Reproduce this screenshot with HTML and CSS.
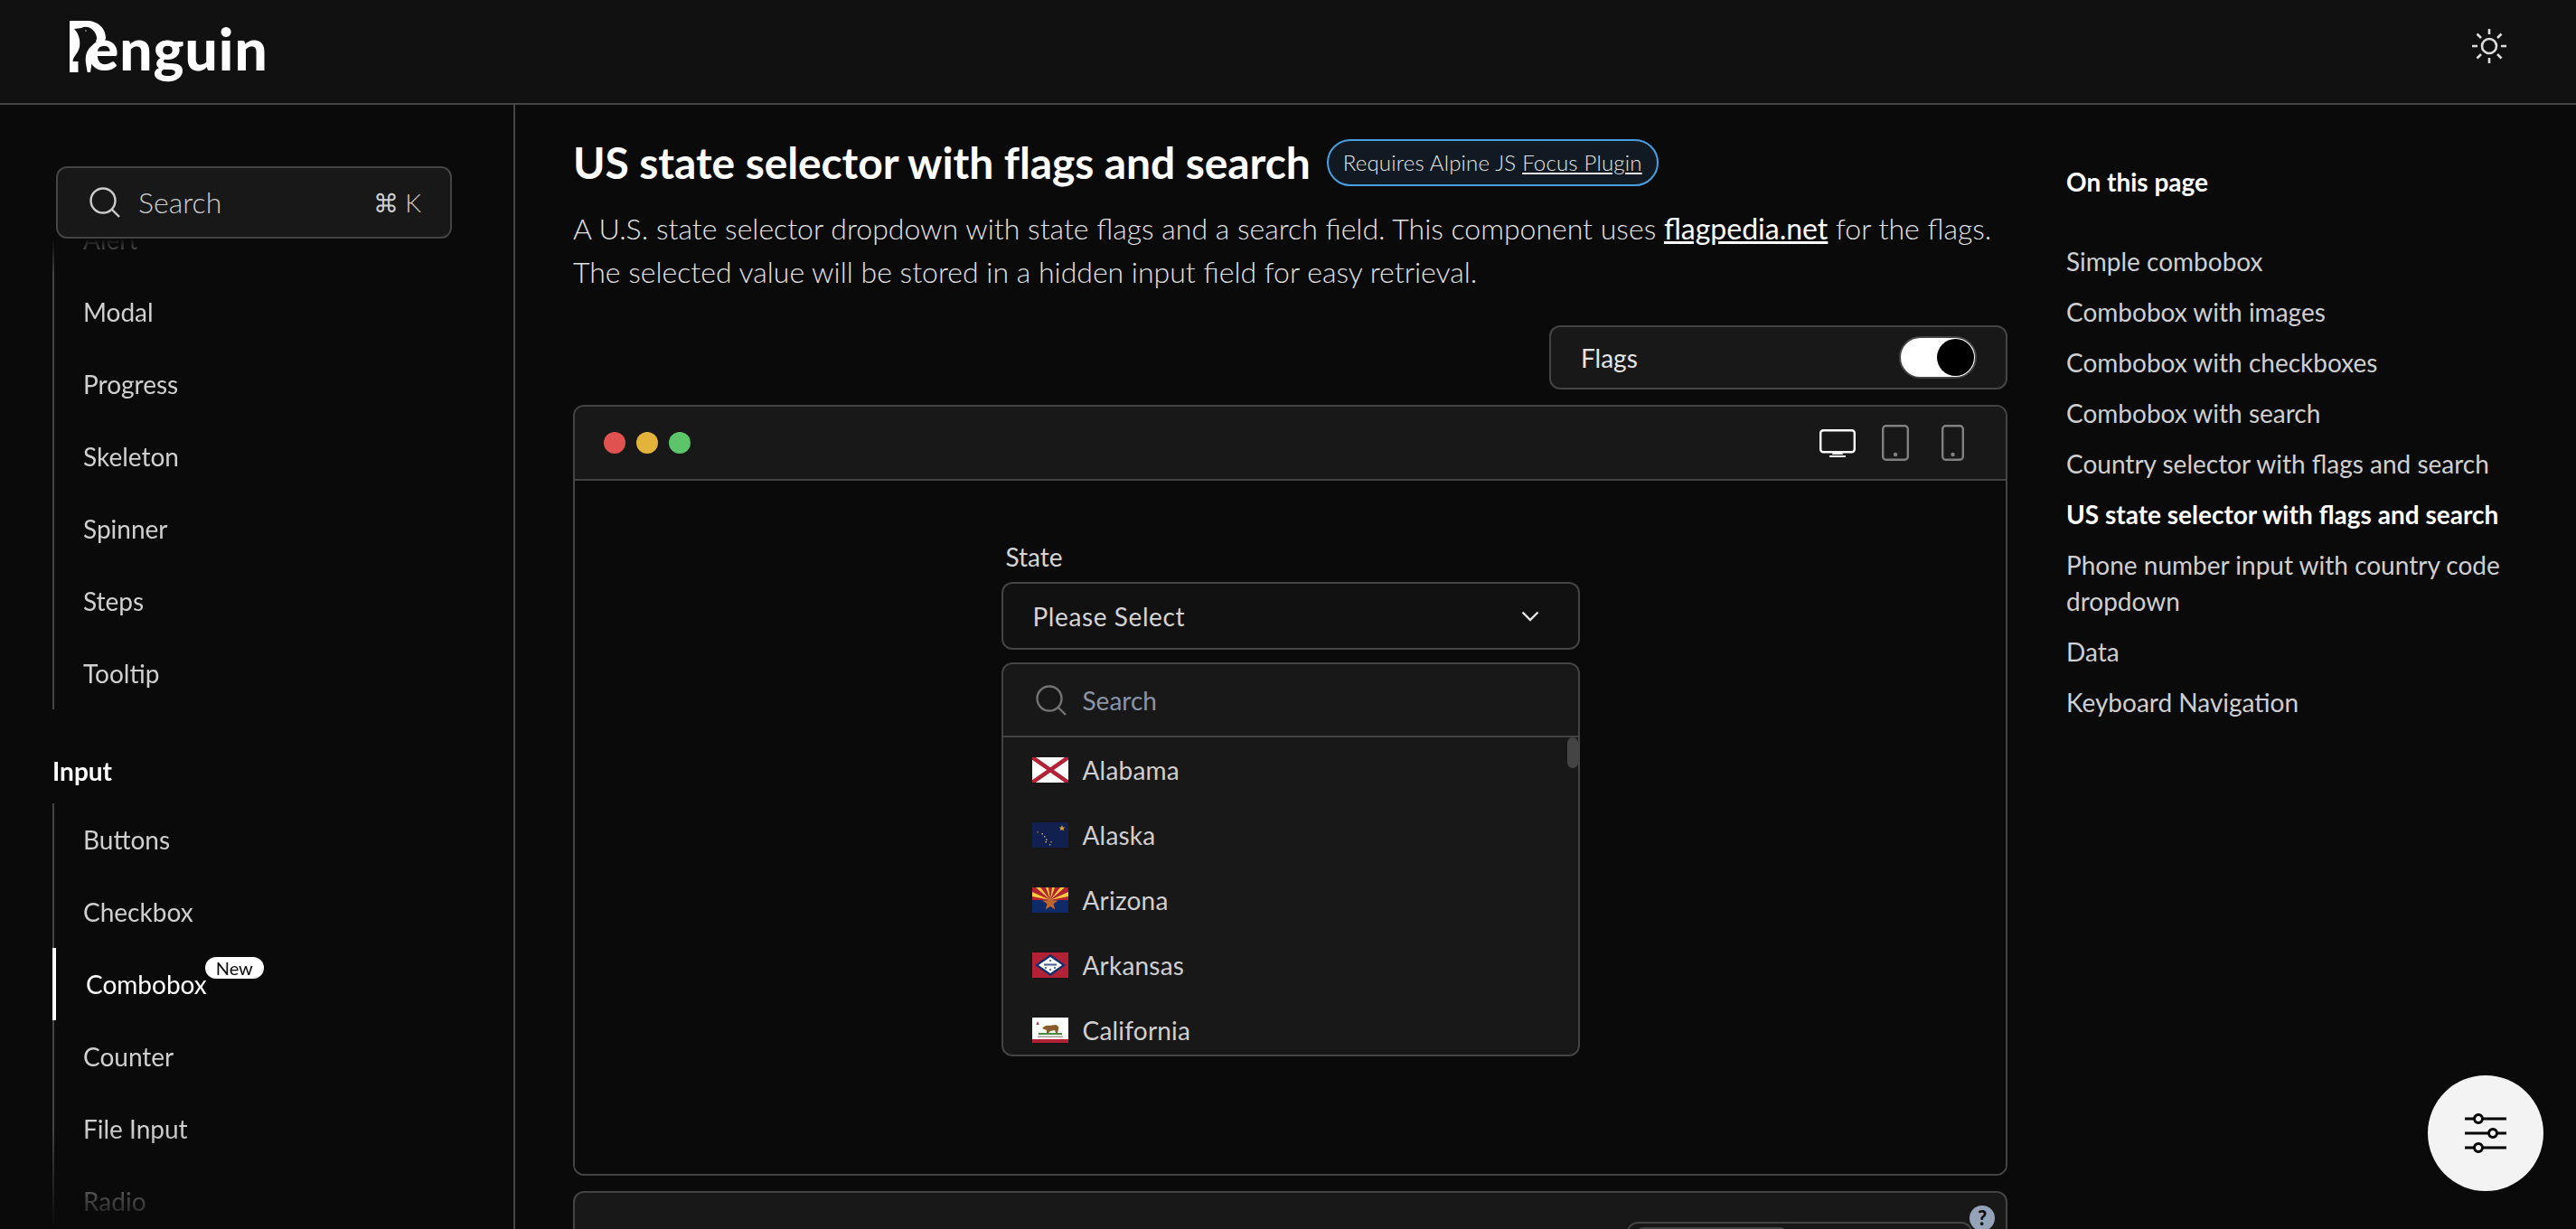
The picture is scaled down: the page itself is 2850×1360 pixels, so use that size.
FILE: index.html
```html
<!DOCTYPE html>
<html lang="en">
<head>
<meta charset="utf-8">
<title>Penguin UI - Combobox</title>
<link rel="stylesheet" href="styles.css">
</head>
<body>
<header class="topbar">
  <a class="logo" href="#">
    <svg class="logo-p" viewBox="76 22 42 60" aria-hidden="true">
      <path fill="#fff" d="M77 23H96C108 23 117 31 117 42L115 49L105 46L100 80H77Z"/>
      <path fill="#111" d="M82 32L90 31C96 28 103 31 106 38C109 44 105 48 100 52C96 56 94 62 95 70L97 82H86.5V68L80.5 68C81 62 86 60 88 52C89 46 88 38 82 32Z"/>
      <circle cx="95" cy="34" r=".7" fill="#fff"/>
    </svg>
    <span class="logo-text">enguin</span>
  </a>
  <svg class="sun" viewBox="0 0 40 40" fill="none" stroke="#ddd" stroke-width="2.6" aria-hidden="true">
    <circle cx="20" cy="20" r="8"/>
    <path d="M20 1v6M20 33v6M1 20h6M33 20h6M6.5 6.500l4.500 4.500M29 29l4.500 4.500M6.500 33.500L11 29M29 11l4.500-4.500"/>
  </svg>
</header>

<div class="layout">
  <aside class="sidebar">
    <div class="search-box">
      <svg class="search-icon" viewBox="0 0 34 34" fill="none" stroke="#ccc" stroke-width="2.4" aria-hidden="true"><circle cx="15" cy="15" r="13.500"/><path d="M24.500 24.500L33 33"/></svg>
      <span class="search-label">Search</span>
      <span class="search-kbd">⌘ K</span>
    </div>
    <nav class="nav-scroll">
      <ul class="nav-list">
        <li><a>Alert</a></li>
        <li><a>Modal</a></li>
        <li><a>Progress</a></li>
        <li><a>Skeleton</a></li>
        <li><a>Spinner</a></li>
        <li><a>Steps</a></li>
        <li><a>Tooltip</a></li>
      </ul>
      <h3 class="nav-heading">Input</h3>
      <ul class="nav-list">
        <li><a>Buttons</a></li>
        <li><a>Checkbox</a></li>
        <li class="active"><a><span class="with-badge">Combobox<span class="new-badge">New</span></span></a></li>
        <li><a>Counter</a></li>
        <li><a>File Input</a></li>
        <li><a>Radio</a></li>
      </ul>
    </nav>
  </aside>

  <main class="main">
    <div class="title-row">
      <h1>US state selector with flags and search</h1>
      <span class="req-badge">Requires Alpine JS <a href="#">Focus Plugin</a></span>
    </div>
    <p class="lead">A U.S. state selector dropdown with state flags and a search field. This component uses <a href="#">flagpedia.net</a> for the flags. The selected value will be stored in a hidden input field for easy retrieval.</p>

    <div class="flags-row">
      <div class="flags-box">
        <span>Flags</span>
        <span class="toggle"><span class="knob"></span></span>
      </div>
    </div>

    <section class="card">
      <div class="card-bar">
        <div class="dots"><i class="dot red"></i><i class="dot yellow"></i><i class="dot green"></i></div>
        <div class="devices">
          <svg class="dev-desktop" viewBox="0 0 40 31" fill="none" stroke="#fff" stroke-width="2.400" aria-hidden="true"><rect x="1.200" y="1.200" width="37.600" height="24" rx="3"/><path d="M15 25.500L14 28H26L25 25.500Z" fill="#fff" stroke="none"/><path d="M11 30h18" stroke-width="2"/></svg>
          <svg class="dev-tablet" viewBox="0 0 30 40" fill="none" stroke="#808080" stroke-width="2.400" aria-hidden="true"><rect x="1.200" y="1.200" width="27.600" height="37.600" rx="3.500"/><circle cx="15" cy="33" r="2.200" fill="#808080" stroke="none"/></svg>
          <svg class="dev-phone" viewBox="0 0 25 40" fill="none" stroke="#808080" stroke-width="2.400" aria-hidden="true"><rect x="1.200" y="1.200" width="22.600" height="37.600" rx="3.500"/><circle cx="12.500" cy="33" r="2.200" fill="#808080" stroke="none"/></svg>
        </div>
      </div>
      <div class="card-body">
        <div class="combo">
          <label class="combo-label">State</label>
          <div class="combo-btn">
            <span>Please Select</span>
            <svg class="chevron" viewBox="0 0 20 12" fill="none" stroke="#e5e5e5" stroke-width="2.400" aria-hidden="true"><path d="M1.500 1.500L10 10L18.500 1.500"/></svg>
          </div>
          <div class="combo-panel">
            <div class="combo-search">
              <svg class="combo-search-icon" viewBox="0 0 34 34" fill="none" stroke="#737373" stroke-width="2.400" aria-hidden="true"><circle cx="15" cy="15" r="13.500"/><path d="M24.500 24.500L33 33"/></svg>
              <span>Search</span>
            </div>
            <div class="combo-list">
              <div class="scroll-thumb"></div>
              <div class="combo-item">
                <svg class="flag" viewBox="0 0 40 28" aria-hidden="true"><rect width="40" height="28" fill="#fff"/><path d="M0 0L40 28M40 0L0 28" stroke="#b22234" stroke-width="4.500"/></svg>
                <span>Alabama</span>
              </div>
              <div class="combo-item">
                <svg class="flag" viewBox="0 0 40 28" aria-hidden="true"><rect width="40" height="28" fill="#11204f"/><g fill="#e0a526"><path d="M33 3l1 2.400 2.300.1-1.800 1.500.7 2.300-2.200-1.300-2.200 1.300.7-2.300-1.800-1.500 2.300-.1z"/><rect x="5.500" y="10" width="1" height="1.500"/><rect x="10.500" y="12" width="1.500" height="1.500"/><rect x="13" y="15" width="1.500" height="1.500"/><rect x="15" y="18.500" width="1.500" height="1.500"/><rect x="14.500" y="21" width="1.500" height="1.500"/><rect x="20.500" y="21" width="1.200" height="1.500"/><rect x="19" y="24" width="1.200" height="1.500"/></g></svg>
                <span>Alaska</span>
              </div>
              <div class="combo-item">
                <svg class="flag" viewBox="0 0 40 28" aria-hidden="true"><rect width="40" height="14" fill="#b22234"/><rect y="14" width="40" height="14" fill="#0f2a68"/><path fill="#fbcb3a" d="M20 14L4 0H9ZM20 14L15 0H18ZM20 14L22 0H25ZM20 14L31 0H36ZM20 14L0 5V10ZM20 14L40 5V10Z"/><path fill="#c1662c" d="M20 8l2.200 6.200 6.500.2-5.200 3.900 1.900 6.300-5.400-3.700-5.400 3.700 1.900-6.300-5.200-3.900 6.500-.2z"/></svg>
                <span>Arizona</span>
              </div>
              <div class="combo-item">
                <svg class="flag" viewBox="0 0 40 28" aria-hidden="true"><rect width="40" height="28" fill="#b22234"/><path fill="#11306f" d="M20 2L37 14L20 26L3 14Z"/><path fill="#fff" d="M20 5L33 14L20 23L7 14Z"/><rect x="13" y="12.500" width="14" height="2" fill="#4a5a86"/><g fill="#11306f"><circle cx="20" cy="9" r=".9"/><circle cx="15" cy="17" r=".9"/><circle cx="25" cy="17" r=".9"/><circle cx="20" cy="19" r=".9"/></g></svg>
                <span>Arkansas</span>
              </div>
              <div class="combo-item">
                <svg class="flag" viewBox="0 0 40 28" aria-hidden="true"><rect width="40" height="28" fill="#fff"/><rect y="24" width="40" height="4" fill="#b22234"/><path fill="#b22234" d="M6 4l1.500 4h-3z"/><path fill="#8a5a2b" d="M11 12C13 9 17 8 19 9L26 8C29 9 30 11 29 13L28 17H26L25 14L20 15L18 17H16L16 14Z"/><rect x="7" y="17" width="26" height="2" fill="#4e8a3e"/><rect x="6" y="20.500" width="28" height="1.400" fill="#9a9a8a"/></svg>
                <span>California</span>
              </div>
            </div>
          </div>
        </div>
      </div>
    </section>

    <section class="card card-next">
      <div class="help-mark">?</div>
      <div class="code-tabs"><div class="code-tab"></div></div>
    </section>
  </main>

  <aside class="toc">
    <h4>On this page</h4>
    <ul>
      <li>Simple combobox</li>
      <li>Combobox with images</li>
      <li>Combobox with checkboxes</li>
      <li>Combobox with search</li>
      <li>Country selector with flags and search</li>
      <li class="current">US state selector with flags and search</li>
      <li>Phone number input with country code dropdown</li>
      <li>Data</li>
      <li>Keyboard Navigation</li>
    </ul>
  </aside>
</div>

<button class="fab" aria-label="Customize">
  <svg viewBox="0 0 46 38" fill="none" stroke="#000" stroke-width="3" aria-hidden="true">
    <path d="M0 3H46M0 19H46M0 35H46"/>
    <circle cx="15" cy="3" r="4.500" fill="#f3f3f3"/>
    <circle cx="31" cy="19" r="4.500" fill="#f3f3f3"/>
    <circle cx="15" cy="35" r="4.500" fill="#f3f3f3"/>
  </svg>
</button>
</body>
</html>
```
FILE: styles.css
```css
* { box-sizing: border-box; }
html, body { margin: 0; height: 1360px; overflow: hidden; }
body {
  background: #0a0a0a;
  color: #d4d4d4;
  font-family: "Lato", "Liberation Sans", sans-serif;
  font-size: 28px;
  line-height: 40px;
  display: flex;
  flex-direction: column;
}
a { color: inherit; }
ul { list-style: none; margin: 0; padding: 0; }

.topbar {
  height: 116px;
  flex: none;
  background: #111;
  border-bottom: 2px solid #444;
  display: flex;
  align-items: center;
  justify-content: space-between;
  padding: 0 76px 12px 76px;
}
.logo { display: flex; align-items: flex-start; align-self: flex-start; text-decoration: none; height: 72px; margin-top: 22px; }
.logo-p { width: 42px; height: 60px; flex: none; }
.logo-text {
  color: #fff;
  font-weight: 900;
  font-size: 64px;
  line-height: 64px;
  letter-spacing: 1px;
  margin-left: -21px;
}
.sun { width: 40px; height: 40px; }

.layout { flex: 1; display: flex; min-height: 0; }

.sidebar {
  width: 570px;
  flex: none;
  border-right: 2px solid #444;
  padding-top: 68px;
  display: flex;
  flex-direction: column;
  min-height: 0;
}
.search-box {
  width: 438px;
  height: 80px;
  margin-left: 62px;
  flex: none;
  background: #181818;
  border: 2px solid #444;
  border-radius: 12px;
  display: flex;
  align-items: center;
  padding: 0 32px 0 35px;
  color: #ccc;
  font-weight: 300;
}
.search-icon { width: 34px; height: 34px; flex: none; }
.search-label { font-size: 32px; margin-left: 20px; flex: 1; }
.search-kbd { font-size: 28px; }

.nav-scroll {
  flex: 1;
  min-height: 0;
  overflow: hidden;
  padding-left: 58px;
  -webkit-mask-image: linear-gradient(to bottom, transparent 0, #000 40px, #000 calc(100% - 110px), transparent 100%);
  mask-image: linear-gradient(to bottom, transparent 0, #000 40px, #000 calc(100% - 110px), transparent 100%);
}
.nav-list { border-left: 2px solid #444; }
.nav-scroll > .nav-list:first-child { margin-top: -39px; }
.nav-list li { height: 80px; display: flex; align-items: center; }
.nav-list a { padding-left: 32px; color: #cfcfcf; }
.nav-list .active { margin-left: -2px; border-left: 4px solid #fff; }
.nav-list .active a { padding-left: 33px; color: #fff; }
.with-badge { position: relative; display: inline-block; }
.new-badge {
  position: absolute;
  left: calc(100% - 2px);
  top: -10px;
  width: 65px;
  height: 24px;
  border-radius: 12px;
  background: #fff;
  color: #0a0a0a;
  font-size: 20px;
  line-height: 24px;
  text-align: center;
}
.nav-heading {
  margin: 48px 0 16px;
  font-size: 28px;
  line-height: 40px;
  font-weight: 700;
  color: #fff;
}

.main { width: 1651px; flex: none; padding: 36px 0 0 64px; min-height: 0; overflow: hidden; }
.title-row { display: flex; align-items: center; gap: 18px; height: 56px; }
h1 { margin: 0; font-size: 48px; line-height: 56px; font-weight: 700; letter-spacing: -.1px; color: #fff; white-space: nowrap; }
.req-badge {
  height: 52px;
  padding: 0 16px;
  display: inline-block;
  line-height: 48px;
  white-space: nowrap;
  font-size: 24px;
  font-weight: 300;
  letter-spacing: .2px;
  color: #e5e5e5;
  background: #111a22;
  border: 2px solid #4a9fe0;
  border-radius: 26px;
}
.lead { margin: 21px 0 0; font-size: 32px; line-height: 48px; color: #e2e2e2; font-weight: 300; }
.lead a { color: #fff; font-weight: 400; }

.flags-row { display: flex; justify-content: flex-end; margin-top: 35px; }
.flags-box {
  width: 507px;
  height: 71px;
  background: #181818;
  border: 2px solid #444;
  border-radius: 12px;
  display: flex;
  align-items: center;
  justify-content: space-between;
  padding: 0 32px 0 33px;
  color: #e5e5e5;
}
.toggle {
  width: 86px;
  height: 47px;
  border-radius: 24px;
  background: #fff;
  border: 2px solid #444;
  padding: 1px;
  display: flex;
  justify-content: flex-end;
}
.knob { width: 41px; height: 41px; border-radius: 50%; background: #000; }

.card { border: 2px solid #444; border-radius: 12px; margin-top: 17px; overflow: hidden; }
.card-bar {
  height: 82px;
  background: #181818;
  border-bottom: 2px solid #444;
  display: flex;
  align-items: center;
  justify-content: space-between;
  padding: 0 46px 0 32px;
}
.dots { display: flex; gap: 12px; }
.dot { width: 24px; height: 24px; border-radius: 50%; display: block; }
.red { background: #e0524f; }
.yellow { background: #e3b33b; }
.green { background: #5cc469; }
.devices { display: flex; align-items: center; gap: 28px; }
.dev-desktop { width: 40px; height: 31px; margin-right: 1px; }
.dev-tablet { width: 30px; height: 40px; margin-right: 8px; }
.dev-phone { width: 25px; height: 40px; }
.card-body { height: 767px; background: #0a0a0a; padding-top: 64px; display: flex; justify-content: center; }
.combo { width: 640px; }
.combo-label { display: block; padding-left: 5px; margin-bottom: 8px; color: #d4d4d4; }
.combo-btn {
  height: 75px;
  background: #111;
  border: 2px solid #444;
  border-radius: 12px;
  display: flex;
  align-items: center;
  justify-content: space-between;
  padding: 0 43px 0 33px;
  letter-spacing: .6px;
  color: #d4d4d4;
}
.chevron { width: 20px; height: 12px; }
.combo-panel {
  height: 436px;
  margin-top: 14px;
  background: #181818;
  border: 2px solid #444;
  border-radius: 12px;
  overflow: hidden;
  display: flex;
  flex-direction: column;
}
.combo-search {
  height: 81px;
  flex: none;
  border-bottom: 2px solid #444;
  display: flex;
  align-items: center;
  padding-left: 36px;
  color: #8a94a6;
}
.combo-search-icon { width: 34px; height: 34px; margin-right: 18px; flex: none; }
.combo-list { position: relative; flex: 1; min-height: 0; overflow: hidden; }
.scroll-thumb {
  position: absolute;
  right: 0;
  top: 0;
  width: 12px;
  height: 34px;
  border-radius: 6px;
  background: #444;
}
.combo-item { height: 72px; display: flex; align-items: center; padding-left: 32px; gap: 16px; color: #cfcfcf; letter-spacing: .2px; }
.flag { width: 40px; height: 28px; flex: none; }

.card-next { height: 120px; background: #181818; position: relative; overflow: visible; }
.help-mark {
  position: absolute;
  top: 14px;
  right: 12px;
  width: 28px;
  height: 28px;
  border-radius: 50%;
  background: #94a3b8;
  color: #111;
  font-size: 22px;
  font-weight: 900;
  line-height: 28px;
  text-align: center;
}
.code-tabs {
  position: absolute;
  top: 32px;
  right: 37px;
  width: 382px;
  height: 60px;
  border: 2px solid #444;
  border-radius: 12px;
  padding: 4px 8px;
}
.code-tab { width: 167px; height: 40px; background: #444; border-radius: 8px; }

.toc { flex: 1; padding: 65px 40px 0 65px; }
.toc h4 { margin: 0 0 48px; font-size: 28px; line-height: 40px; font-weight: 700; color: #fff; }
.toc ul { display: flex; flex-direction: column; gap: 16px; width: 530px; }
.toc li { color: #cfcfcf; }
.toc .current { color: #fff; font-weight: 700; }

.fab {
  position: fixed;
  left: 2686px;
  top: 1190px;
  width: 128px;
  height: 128px;
  border: 0;
  padding: 0;
  border-radius: 50%;
  background: #f3f3f3;
  display: flex;
  align-items: center;
  justify-content: center;
}
.fab svg { width: 46px; height: 38px; overflow: visible; }
```
